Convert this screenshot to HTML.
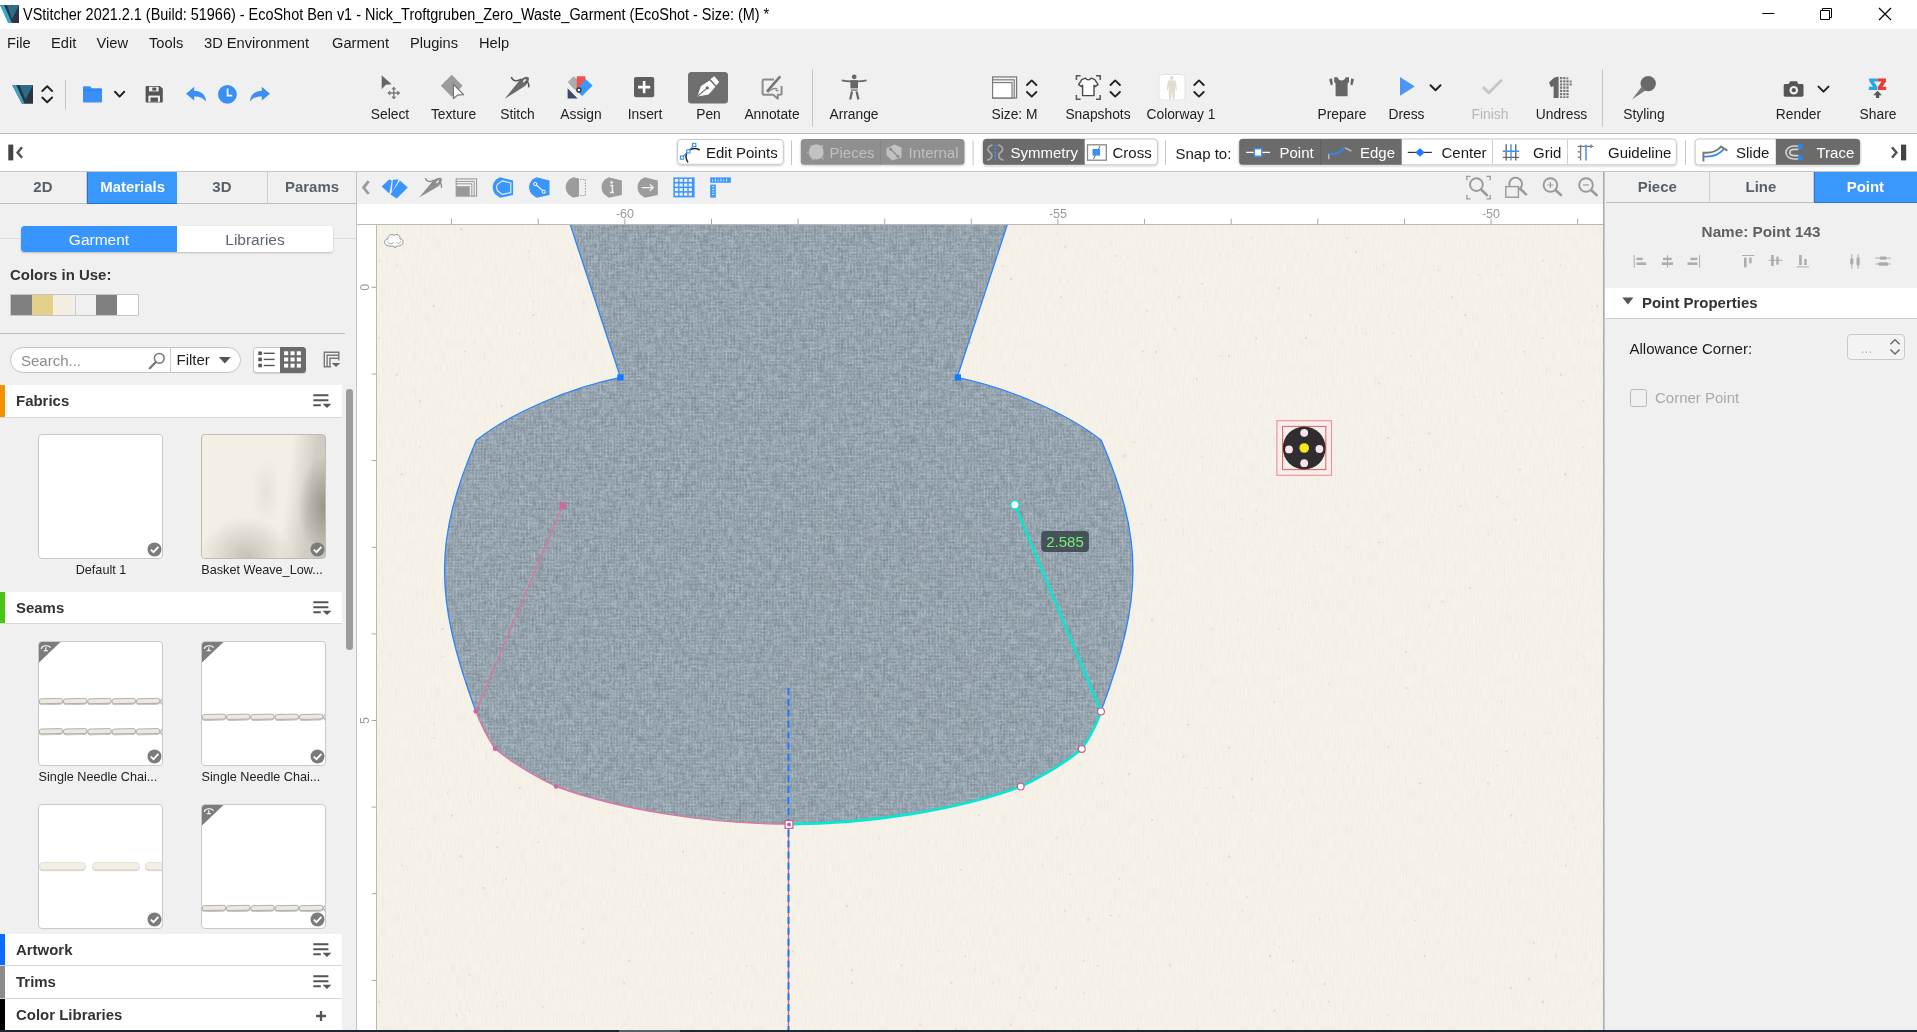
<!DOCTYPE html>
<html>
<head>
<meta charset="utf-8">
<title>VStitcher</title>
<style>
*{box-sizing:border-box;margin:0;padding:0}
html,body{width:1917px;height:1032px;overflow:hidden;background:#f0f0f0;font-family:"Liberation Sans",sans-serif;color:#222}
.a{position:absolute}
.t{position:absolute;white-space:nowrap;line-height:1}
#titlebar{left:0;top:0;width:1917px;height:29px;background:#fff}
#menubar{left:0;top:29px;width:1917px;height:28px;background:#f0f0f0}
#menubar .t{top:7px;font-size:14.67px;color:#1a1a1a}
#toolbar{left:0;top:57px;width:1917px;height:76px;background:#f0f0f0}
.tl{position:absolute;top:51px;font-size:13.800px;color:#222;white-space:nowrap;line-height:1;transform:translateX(-50%)}
#tbline{left:0;top:133px;width:1917px;height:1px;background:#bdbdbd}
#subbar{left:0;top:134px;width:1917px;height:37px;background:#fff}
#subline{left:0;top:171px;width:1917px;height:1px;background:#c6c6c6}
.btn{position:absolute;top:5.7px;height:26px;font-size:15px;line-height:26px;white-space:nowrap;color:#1a1a1a}
.vsep{position:absolute;width:1px;background:#c4c4c4}
#tabsrow{left:0;top:172px;width:1917px;height:32px;background:#f0f0f0}
.tab{position:absolute;top:0;height:32px;font-size:15.500px;font-weight:bold;color:#5a6068;text-align:center;line-height:30px;border-right:1px solid #cfcfcf;border-bottom:1px solid #b9bec6;background:#f0f0f0}
.tab span{display:inline-block;transform:scaleX(.965)}
.tab.on{background:#3a97fc;color:#fff;border-right:none;border-bottom-color:#2676cf;border-left:1px solid #2676cf}
#leftpanel{left:0;top:204px;width:356px;height:826px;background:#f0f0f0}
#canvaswrap{left:356px;top:204px;width:1249px;height:826px;background:#fff}
#rightpanel{left:1605px;top:204px;width:312px;height:826px;background:#f0f0f0}
#bottomstrip{left:0;top:1030px;width:1917px;height:2px;background:#1f2733}
.hdr{position:absolute;left:0;width:342px;height:32px;background:#fff;border-bottom:1px solid #d6d6d6}
.hdr .bar{position:absolute;left:0;top:0;width:4.500px;height:100%}
.hdr .t{left:16px;top:7.800px;font-size:15.500px;transform:scaleX(.965);transform-origin:0 0;font-weight:bold;color:#333}
.thumb{position:absolute;width:125px;height:125px;background:#fff;border:1px solid #c9c9c9;border-radius:4px;overflow:hidden}
.cap{position:absolute;font-size:13.600px;color:#222;white-space:nowrap;line-height:1;transform:translateX(-50%) scaleX(.93)}
</style>
</head>
<body>
<div id="root" style="position:absolute;left:0;top:0;width:1917px;height:1032px;will-change:transform;transform:translateZ(0)">
<div id="titlebar" class="a">
<svg class="a" style="left:0;top:5px" width="20" height="19" viewBox="0 0 20 19"><polygon points="0,0 19,0 19,18 10,18" fill="#2b3544"/><polygon points="0,0 4,0 12,18 10,18 8,18" fill="#3aa6c9"/><polygon points="7,0 19,0 12,14" fill="#2f6f86"/></svg>
<div class="t" id="ttl" style="left:23px;top:6.600px;font-size:16px;color:#000;transform:scaleX(0.9026);transform-origin:0 0">VStitcher 2021.2.1 (Build: 51966) - EcoShot Ben v1 - Nick_Troftgruben_Zero_Waste_Garment (EcoShot - Size: (M) *</div>
<svg class="a" style="left:1755px;top:0" width="150" height="29" viewBox="0 0 150 29"><g stroke="#000" stroke-width="1" fill="none"><path d="M7.300 13.500H19.300"/><path d="M65.500 10.500h9v9h-9z"/><path d="M67.500 10.500v-2h9v9h-2"/><path d="M124 8l12 12M136 8l-12 12" stroke-width="1.2"/></g></svg>
</div>
<div id="menubar" class="a">
<div class="t" style="left:7px">File</div><div class="t" style="left:51px">Edit</div><div class="t" style="left:96.5px">View</div><div class="t" style="left:149px">Tools</div><div class="t" style="left:204px">3D Environment</div><div class="t" style="left:332px">Garment</div><div class="t" style="left:410px">Plugins</div><div class="t" style="left:479px">Help</div>
</div>
<div id="toolbar" class="a">
<svg class="a" style="left:0;top:0" width="1917" height="76" viewBox="0 57 1917 76">
<!-- logo -->
<polygon points="12.2,85 33,85 33,103.8 22,103.8" fill="#2b3443"/>
<polygon points="12.2,85 16.3,85 24.6,103.8 22,103.8" fill="#36a3c8"/>
<polygon points="19.5,85 33,85 25.5,99.5" fill="#2d6c84"/>
<g fill="none" stroke="#222" stroke-width="1.9" stroke-linecap="round" stroke-linejoin="round">
<path d="M42.3 91L47.2 86.2L52.1 91M42.3 97.5L47.2 102.3L52.1 97.5"/>
<path d="M115 91.8L119.6 96.6L124.2 91.8" stroke-width="2"/>
<path d="M1027 85L1031.7 80.4L1036.4 85M1027 92L1031.7 96.6L1036.4 92"/>
<path d="M1110.5 85L1115.2 80.4L1119.9 85M1110.5 92L1115.2 96.6L1119.9 92"/>
<path d="M1194.3 85L1199 80.4L1203.7 85M1194.3 92L1199 96.6L1203.7 92"/>
<path d="M1430.5 85.2L1435.5 90.2L1440.5 85.2" stroke-width="2"/>
<path d="M1818.5 86.6L1823.5 91.6L1828.5 86.6" stroke-width="2"/>
</g>
<rect x="65" y="80" width="1" height="29.5" fill="#c6c6c6"/>
<rect x="812" y="69.5" width="1" height="57" fill="#c6c6c6"/>
<rect x="1602" y="69.5" width="1" height="57" fill="#c6c6c6"/>
<!-- folder -->
<path d="M83 87.2q0-1 1-1h6.2l1.6 2h9.2q1 0 1 1v12.3q0 1-1 1H84q-1 0-1-1z" fill="#3a8ff7"/>
<rect x="83" y="89.6" width="19" height="0.9" fill="#2f7be0"/>
<!-- save -->
<path d="M145.6 87q0-1 1-1h13.4l2.8 2.8v12.8q0 1-1 1h-15.2q-1 0-1-1z" fill="#555"/>
<rect x="149" y="86.8" width="9.6" height="4.6" fill="#f0f0f0"/><rect x="152.3" y="87.6" width="4" height="3" fill="#555"/>
<rect x="148.4" y="95.6" width="11.6" height="6.2" fill="#f0f0f0"/><rect x="150.5" y="97.5" width="7.4" height="4.3" fill="#555"/>
<!-- undo clock redo -->
<path d="M194.2 86.8L186 93.8L194.2 100.6V96.4C199.5 96.2 203.2 97.8 206.2 101.6C205.4 94.6 201.4 91 194.2 90.8Z" fill="#3a8ff7"/>
<circle cx="227.4" cy="94.4" r="9.4" fill="#3a8ff7"/><path d="M227.6 88.6V95.6H232.2" stroke="#fff" stroke-width="1.7" fill="none"/>
<path d="M261.8 86.8L270 93.8L261.8 100.6V96.4C256.5 96.2 252.8 97.8 249.8 101.6C250.6 94.6 254.6 91 261.8 90.8Z" fill="#3a8ff7"/>
<!-- select -->
<path d="M381.7 75.3L391.6 84.3L385.8 84.8L381.7 89.2Z" fill="#666"/>
<g stroke="#777" stroke-width="1.3" fill="none"><path d="M393.8 87.6V98.4M388.4 93H399.2"/><path d="M392 89.4L393.8 87.6L395.6 89.4M392 96.6L393.8 98.4L395.6 96.6M390.2 91.2L388.4 93L390.2 94.8M397.4 91.2L399.2 93L397.4 94.8"/></g>
<!-- texture -->
<polygon points="451.7,74.8 462.6,85.8 451.7,96.8 440.8,85.8" fill="#9c9c9c"/>
<path d="M453.4 84.3V98.6L457.4 95.2L463.6 94.6Z" fill="#fff" stroke="#777" stroke-width="1.3" stroke-linejoin="round"/>
<!-- stitch -->
<path d="M504.800 98.800L519.400 80.600C522 77.600 526.800 75.600 528.400 77.200C530 78.800 528 83.400 525 86Z" fill="#6a6a6a"/>
<ellipse cx="524.6" cy="80.7" rx="2.1" ry="1" transform="rotate(-45 524.6 80.7)" fill="#f0f0f0"/>
<path d="M511.3 77C512.6 81.2 517 81.8 521.4 79.2M525 82.2C527.6 80.4 529.4 83.4 528.6 87.4" stroke="#555" stroke-width="1.5" fill="none"/>
<!-- assign -->
<polygon points="567.8,82 573.6,76.3 577,79 577,91 572.8,88" fill="#adadad"/>
<polygon points="576.8,76.3 585.4,76.3 585.4,82 576.8,90.6" fill="#f0524d"/>
<polygon points="585.6,79 592.6,85.6 582.2,96 576.4,90.4" fill="#3b99fc"/>
<polygon points="567.6,88.3 567.6,98.4 577.6,98.4" fill="#3d4a63"/>
<circle cx="578.9" cy="90" r="2" fill="#fff" stroke="#2b3443" stroke-width="1.3"/>
<!-- insert -->
<rect x="634" y="77" width="20.2" height="20.2" rx="2" fill="#5f5f5f"/>
<path d="M644.1 81V93.2M638 87.1H650.2" stroke="#fff" stroke-width="2.6"/>
<!-- pen -->
<rect x="688" y="72" width="40" height="31.6" rx="3.5" fill="#6e6e6e"/>
<path d="M697.4 96.4L700.8 86.2L709.6 80.6L715.4 86.8L708.6 94.6Z" fill="#fff"/>
<polygon points="710.4,79 714.4,76.2 719.2,82 716.2,85.4" fill="#fff"/>
<path d="M697.8 96L706.4 88.6" stroke="#6e6e6e" stroke-width="1.1"/><circle cx="707.3" cy="87.9" r="1.7" fill="#6e6e6e"/>
<!-- annotate -->
<path d="M781.6 86V93.4q0 1.4-1.4 1.4h-2.4v4l-4.6-4h-9.2q-1.4 0-1.4-1.4V81q0-1.4 1.4-1.4h10" fill="none" stroke="#8c8c8c" stroke-width="2" stroke-linejoin="round"/>
<path d="M767.6 90.8L779.6 77.2" stroke="#777" stroke-width="2.6" stroke-linecap="round"/>
<path d="M768 92.4C771 89.6 774 88 776.6 88.6C775 90.6 777 91.2 778.6 90.4" stroke="#888" stroke-width="1.2" fill="none"/>
<!-- arrange -->
<circle cx="854.2" cy="76.8" r="2.4" fill="#666"/>
<path d="M841.8 80.4Q848 81.6 854.2 81.2Q860.4 81.6 866.6 80.4" stroke="#666" stroke-width="1.8" fill="none"/>
<rect x="850.4" y="80.2" width="7.6" height="8.2" fill="#666"/><rect x="850.8" y="89.4" width="6.8" height="1.4" fill="#777"/>
<path d="M852 91.6L850.2 99.6M856.6 91.6L858.4 99.6" stroke="#666" stroke-width="2.2"/>
<!-- size -->
<rect x="992.6" y="76.9" width="24" height="21" fill="#f0f0f0" stroke="#777" stroke-width="1.2"/>
<rect x="992.6" y="79.8" width="21.6" height="18.1" fill="#f0f0f0" stroke="#777" stroke-width="1.1"/>
<rect x="992.6" y="82.6" width="19.4" height="15.3" fill="#fff" stroke="#777" stroke-width="1.1"/>
<!-- snapshots -->
<path d="M1076.4 80V75.8H1080.6M1096 75.8H1100.2V80M1100.2 95V99.2H1096M1080.6 99.2H1076.4V95" fill="none" stroke="#555" stroke-width="1.5"/>
<path d="M1081.8 79.6L1085.4 78.2C1086.8 80.4 1089.8 80.4 1091.2 78.2L1094.8 79.6L1098 84.6L1095 86.6L1094 85.2V95.6H1082.6V85.2L1081.6 86.6L1078.6 84.6Z" fill="#fff" stroke="#4a4a4a" stroke-width="1.4" stroke-linejoin="round"/>
<!-- colorway -->
<rect x="1159" y="74.5" width="26" height="25.6" rx="3.5" fill="#fff" stroke="#e4e4e4" stroke-width="1"/>
<g fill="#e2ddcf"><circle cx="1171.800" cy="77.900" r="1.900"/><path d="M1168.200 80.600Q1171.800 79.800 1175.400 80.600L1176.600 85.600L1176.800 90.400L1175.700 90.500L1175.100 85.800L1174.900 91L1174.500 99.400H1172.600L1171.800 91.500L1171 99.400H1169.100L1168.700 91L1168.500 85.800L1167.900 90.500L1166.800 90.400L1167 85.600Z"/></g>
<!-- prepare -->
<path d="M1334.2 77.2H1337.6C1338.6 81.6 1344.6 81.6 1345.6 77.2H1349V82L1347.6 83.4V96.2H1335.6V83.4L1334.2 82Z" fill="#666"/>
<polygon points="1329.2,79.2 1332,78.2 1332.8,84.6 1330.8,85.6" fill="#666"/><polygon points="1354,79.2 1351.2,78.2 1350.4,84.6 1352.4,85.6" fill="#666"/>
<!-- dress -->
<polygon points="1400,77 1414.8,86.4 1400,95.8" fill="#4b96f5"/>
<!-- finish -->
<path d="M1482.8 87L1489 92.8L1501.8 79.8" stroke="#c6c6c6" stroke-width="2.8" fill="none"/>
<!-- undress -->
<path d="M1549 82.4L1554 77.8L1558.6 76.4V98H1553.6V86L1551 87.2Z" fill="#666"/>
<g fill="#777"><path d="M1560 77h2.2v2.2h-2.2zM1563.2 77h2.2v2.2h-2.2zM1566.400 77.6h2v1.600h-2z"/>
<path d="M1560 80.200h2.200v2.200h-2.200zM1563.200 80.200h2.200v2.200h-2.200zM1566.400 80.200h2.200v2.200h-2.200zM1569.600 80.600h2v1.800h-2z"/>
<path d="M1560 83.400h2.200v2.200h-2.200zM1563.200 83.400h2.200v2.200h-2.200zM1566.400 83.400h2.200v2.200h-2.200zM1569.600 83.400h2.200v2.200h-2.200z"/>
<path d="M1560 86.600h2.200v2.200h-2.200zM1563.200 86.600h2.200v2.200h-2.200zM1566.400 86.600h2.200v2.200h-2.200z"/>
<path d="M1560 89.800h2.200v2.200h-2.200zM1563.200 89.800h2.200v2.200h-2.200zM1566.400 89.800h2.200v2.200h-2.200z"/>
<path d="M1560 93h2.200v2.200h-2.200zM1563.200 93h2.200v2.200h-2.200zM1566.400 93h2.200v2.200h-2.200z"/>
<path d="M1560 96.200h2.200v1.800h-2.200zM1563.200 96.200h2.200v1.800h-2.200zM1566.400 96.200h2.200v1.800h-2.200z"/></g>
<!-- styling -->
<circle cx="1648.2" cy="83.6" r="7.7" fill="#696969"/><polygon points="1632,99.6 1641.600,86.8 1645.400,90.400" fill="#7a7a7a"/>
<!-- render -->
<path d="M1783.700 85.400q0-1.400 1.400-1.400h3.600l1.400-2.800h6.800l1.400 2.800h3.800q1.400 0 1.400 1.400v9.900q0 1.400-1.400 1.400h-17q-1.400 0-1.400-1.400z" fill="#555"/>
<circle cx="1793.800" cy="90.200" r="4.300" fill="#f0f0f0"/><circle cx="1793.800" cy="90.200" r="2.100" fill="#555"/>
<!-- share -->
<path d="M1868.800 78.400H1877.600V81.600H1873.800L1877.400 86.800V90H1868.800V86.800H1873L1869.400 81.600Z" fill="#29a9e0"/>
<path d="M1877.600 78.400H1886V81.600L1882.400 86.800H1886.200V90H1878V86.800L1881.600 81.600H1877.600Z" fill="#e83a3a"/>
<path d="M1877.600 90.800L1882 95.200H1879.200V98H1876V95.200H1873.200Z" fill="#555"/>
</svg>
<div class="tl" style="left:390px">Select</div><div class="tl" style="left:453.5px">Texture</div><div class="tl" style="left:517.5px">Stitch</div><div class="tl" style="left:581px">Assign</div><div class="tl" style="left:645px">Insert</div><div class="tl" style="left:708.5px">Pen</div><div class="tl" style="left:772px">Annotate</div><div class="tl" style="left:854px">Arrange</div>
<div class="tl" style="left:1014.5px">Size: M</div><div class="tl" style="left:1098px">Snapshots</div><div class="tl" style="left:1181px">Colorway 1</div>
<div class="tl" style="left:1342px">Prepare</div><div class="tl" style="left:1406.5px">Dress</div><div class="tl" style="left:1490px;color:#b8b8b8">Finish</div><div class="tl" style="left:1561.5px">Undress</div><div class="tl" style="left:1644px">Styling</div><div class="tl" style="left:1798.5px">Render</div><div class="tl" style="left:1878px">Share</div>
</div>
<div id="tbline" class="a"></div>
<div id="subbar" class="a">
<svg class="a" style="left:0;top:0" width="1917" height="37" viewBox="0 134 1917 37">
<defs><filter id="sh" x="-5%" y="-20%" width="110%" height="150%"><feDropShadow dx="0" dy="1" stdDeviation="0.8" flood-color="#000" flood-opacity="0.22"/></filter></defs>
<!-- collapse icons -->
<rect x="8.300" y="144.600" width="5" height="15.800" fill="#444"/><path d="M22 147.200L17.600 152.500L22 157.800" stroke="#555" stroke-width="2.500" fill="none"/>
<rect x="1901" y="144.600" width="5.200" height="15.800" fill="#444"/><path d="M1892 147.200L1896.400 152.500L1892 157.800" stroke="#555" stroke-width="2.500" fill="none"/>
<!-- separators -->
<g fill="#c4c4c4"><rect x="791" y="140.500" width="1" height="24.500"/><rect x="972.600" y="140.500" width="1" height="24.500"/><rect x="1165" y="140.500" width="1" height="24.500"/><rect x="1685" y="140.500" width="1" height="24.500"/></g>
<!-- Edit points -->
<rect x="677.500" y="139.500" width="105.800" height="24.800" rx="3.500" fill="#fff" stroke="#c9c9c9" filter="url(#sh)"/>
<path d="M688 162.400C683.500 155 687 149.500 693 148.700C695.500 148.400 697.500 148.800 699.700 150" stroke="#222" stroke-width="1.500" fill="none"/>
<path d="M681.800 157.600L688.400 151.400L694.200 144.600" stroke="#3a8ff7" stroke-width="1.300" fill="none"/>
<g fill="#fff" stroke="#3a8ff7" stroke-width="1.100"><rect x="680.400" y="156" width="3.200" height="3.200"/><rect x="686.800" y="149.800" width="3.200" height="3.200"/><rect x="692.600" y="143.400" width="3.200" height="3.200"/></g>
<!-- Pieces / Internal -->
<rect x="800.800" y="139" width="163.700" height="25.800" rx="3.500" fill="#8f8f8f" filter="url(#sh)"/>
<rect x="880" y="139" width="1" height="25.800" fill="#868686"/>
<path d="M809 152.500C809 147 812 144.500 816.500 144.500C821 144.500 823.500 147 823.500 152.500C823.500 157 821 159 816.500 159.500C812 159 809 157.500 809 152.500Z" fill="#c2c2c2"/>
<g fill="#b4b4b4"><circle cx="811.200" cy="146" r="1"/><circle cx="822.400" cy="146" r="1"/><circle cx="807.800" cy="152.600" r="1"/><circle cx="812.600" cy="159.400" r="1"/><circle cx="822.800" cy="158.600" r="1"/></g>
<path d="M886.500 148.500L894.500 144.500L901.500 147.500L901.500 157.500L892 160.500L886.500 155Z" fill="#c2c2c2"/>
<path d="M891 149.500L897.500 156" stroke="#8f8f8f" stroke-width="1.400"/><circle cx="890.600" cy="149.200" r="1.600" fill="#8f8f8f"/><circle cx="898" cy="156.400" r="1.600" fill="#8f8f8f"/>
<!-- Symmetry / Cross -->
<rect x="983" y="139" width="174.500" height="25.800" rx="3.500" fill="#fff" stroke="#c9c9c9" filter="url(#sh)"/>
<path d="M986.500 139H1084.700V164.800H986.500q-3.500 0-3.500-3.500V142.500q0-3.500 3.500-3.500z" fill="#6b6b6b"/>
<path d="M992.600 145C987 146 987 150.500 990 152.500C993 154.500 992.500 159.500 987 160M998 145C1003.600 146 1003.600 150.500 1000.600 152.500C997.600 154.500 998.100 159.500 1003.600 160" stroke="#a8a8a8" stroke-width="1.600" fill="none"/>
<path d="M995.300 144.500V161.500" stroke="#3a8ff7" stroke-width="1.400" stroke-dasharray="2.200 1.300"/>
<rect x="1087.500" y="144.800" width="18.800" height="15.400" fill="#fff" stroke="#888" stroke-width="1.300"/>
<path d="M1100 146L1093.500 159" stroke="#666" stroke-width="1"/><rect x="1092.500" y="149" width="7.600" height="6.600" fill="#3a8ff7"/>
<!-- Snap group -->
<rect x="1239.200" y="139" width="437.200" height="25.800" rx="3.500" fill="#fff" stroke="#c9c9c9" filter="url(#sh)"/>
<path d="M1242.700 139H1401.700V164.800H1242.700q-3.500 0-3.500-3.500V142.500q0-3.500 3.500-3.500z" fill="#6b6b6b"/>
<rect x="1320.200" y="139" width="1" height="25.800" fill="#5e5e5e"/>
<rect x="1492" y="139.500" width="1" height="24.800" fill="#d0d0d0"/><rect x="1567" y="139.500" width="1" height="24.800" fill="#d0d0d0"/>
<path d="M1246.200 152.400H1270" stroke="#fff" stroke-width="1.300"/><rect x="1254.400" y="148.800" width="7.400" height="7.400" fill="#fff" stroke="#3a8ff7" stroke-width="1.400"/>
<path d="M1328.800 153.500V159.200" stroke="#bbb" stroke-width="1.500"/><path d="M1344.600 147.600L1351.400 151" stroke="#bbb" stroke-width="1.500"/>
<path d="M1328.600 153.800C1336 154.500 1340 152.500 1344.800 147.600" stroke="#2f86f6" stroke-width="1.800" fill="none"/>
<path d="M1407.800 152.400H1431.800" stroke="#333" stroke-width="1.200"/><polygon points="1420,148 1424.600,152.400 1420,156.800 1415.400,152.400" fill="#1f7bff"/>
<g stroke="#666" stroke-width="1.400"><path d="M1506.200 144.300V160.400M1515.800 144.300V160.400M1502.800 157.400H1519.200"/></g><path d="M1511 144.300V160.400M1502.800 151.200H1519.200" stroke="#3a8ff7" stroke-width="1.400"/>
<g stroke="#777" stroke-width="1.300"><path d="M1580.600 144.800V160.400M1577.600 146.400H1593.400M1591 144.600V148M1577.600 151.800H1580.600M1577.600 157.200H1580.600"/></g><path d="M1586 144.800V160.400" stroke="#3a8ff7" stroke-width="1.500"/>
<!-- Slide / Trace -->
<rect x="1695.200" y="139" width="164.800" height="25.800" rx="3.500" fill="#fff" stroke="#c9c9c9" filter="url(#sh)"/>
<path d="M1775.800 139H1856.500q3.500 0 3.500 3.500V161.300q0 3.500-3.500 3.500H1775.800z" fill="#6b6b6b"/>
<path d="M1703.400 161.400V152.600C1711 153.400 1716.500 151.600 1721 146.600L1727.400 150.600" stroke="#777" stroke-width="1.900" fill="none"/>
<path d="M1704 156.600C1712.500 157.200 1718.500 155 1723.600 149.400" stroke="#2f86f6" stroke-width="1.700" fill="none"/>
<path d="M1798.500 146H1794C1789.500 146 1786 148.800 1786 152.500C1786 156.200 1789.500 159 1794 159H1798.500M1798.500 149.400H1794.400C1791.600 149.400 1789.800 150.700 1789.800 152.500C1789.800 154.300 1791.600 155.600 1794.400 155.600H1798.500" stroke="#d2d2d2" stroke-width="1.700" fill="none"/>
<rect x="1798.300" y="144.400" width="4" height="4.900" fill="#1e8bff"/><rect x="1798.300" y="155.400" width="4" height="4.900" fill="#1e8bff"/>
</svg>
<div class="btn" style="left:706px">Edit Points</div>
<div class="btn" style="left:829.500px;color:#c0c0c0">Pieces</div><div class="btn" style="left:908.500px;color:#c0c0c0">Internal</div>
<div class="btn" style="left:1010.500px;color:#fff">Symmetry</div><div class="btn" style="left:1112.500px">Cross</div>
<div class="btn" style="left:1175.500px;top:6.7px">Snap to:</div>
<div class="btn" style="left:1279.500px;color:#fff">Point</div><div class="btn" style="left:1360px;color:#fff">Edge</div><div class="btn" style="left:1441.500px">Center</div><div class="btn" style="left:1533px">Grid</div><div class="btn" style="left:1608px">Guideline</div>
<div class="btn" style="left:1736px">Slide</div><div class="btn" style="left:1816.500px;color:#fff">Trace</div>
</div>
<div id="subline" class="a"></div>
<div id="tabsrow" class="a">
<div class="tab" style="left:0;width:87px"><span>2D</span></div><div class="tab on" style="left:87px;width:90px"><span>Materials</span></div><div class="tab" style="left:177px;width:91px"><span>3D</span></div><div class="tab" style="left:268px;width:88px;border-right:none"><span>Params</span></div>
<div class="a" style="left:356px;top:0;width:1px;height:32px;background:#c4c4c4"></div>
<div class="a" style="left:1603px;top:0;width:1px;height:32px;background:#ababab"></div><div class="a" style="left:1604px;top:0;width:1px;height:32px;background:#c9c9c9"></div>
<div class="tab" style="left:1605.500px;width:104px;height:31px"><span>Piece</span></div><div class="tab" style="left:1709.500px;width:104px;height:31px"><span>Line</span></div><div class="tab on" style="left:1813.500px;width:103.500px;height:31px"><span>Point</span></div>
<svg class="a" style="left:356px;top:0" width="1250" height="32" viewBox="356 172 1250 32">
<path d="M368.600 181.200L363.600 187.600L368.600 194" stroke="#9a9a9a" stroke-width="2.800" fill="none"/>
<!-- swatches icon -->
<g fill="#3a96fd"><polygon points="381.600,186.600 389,179.600 391.800,180.400 389.400,193.600"/><polygon points="392.800,179.800 398.800,179.400 391.600,193"/><polygon points="400,180.400 407.800,187.400 396.800,198.400 390.400,194.600"/></g>
<!-- needle -->
<path d="M419.200 197.400L433 180.800C435.400 178.200 440 176.800 441.400 178.200C442.800 179.600 441 184 438 186.400Z" fill="#8e8e8e"/>
<ellipse cx="437.600" cy="181.800" rx="1.900" ry="0.900" transform="rotate(-45 437.600 181.800)" fill="#f0f0f0"/>
<path d="M425.400 178C426.400 181.800 430.200 182.400 434 180.200M437.800 183.200C440.400 181.600 442 184 441.400 187.800" stroke="#8a8a8a" stroke-width="1.400" fill="none"/>
<!-- stack -->
<rect x="456.200" y="178.900" width="20.400" height="17.200" fill="#f0f0f0" stroke="#999" stroke-width="1.100"/><path d="M456.200 181.400H474.200V196M456.200 183.800H471.800V196" stroke="#999" stroke-width="1" fill="none"/><rect x="456.200" y="186.200" width="13.600" height="9.900" fill="#999"/>
<!-- blue piece w/ outline -->
<path d="M500.0 177.2L513.1 180.4L513.1 195L500.0 197.8L495.0 194C492.5 190.5 492.0 186.5 493.5 183L496.0 179.5Z" fill="#3a96fd"/>
<path d="M502.300 180.900L510.800 183V192.600L502.200 194.400L497.600 190.800C496.400 188.600 496.400 186.400 497.400 184.400Z" fill="none" stroke="#e8f2ff" stroke-width="1.100"/>
<path d="M536.4 177.2L549.5 180.4L549.5 195L536.4 197.8L531.4 194C528.9 190.5 528.4 186.5 529.9 183L532.4 179.5Z" fill="#3a96fd"/>
<path d="M535.600 184.400L543.400 191.400" stroke="#fff" stroke-width="1.200"/><circle cx="535.200" cy="184" r="1.600" fill="#3a96fd" stroke="#fff" stroke-width="1"/><circle cx="543.800" cy="191.800" r="1.600" fill="#3a96fd" stroke="#fff" stroke-width="1"/>
<!-- gray pieces -->
<path d="M573 177.2L579 178.600V196.500L573 197.800L568 194C565.5 190.500 565 186.500 566.5 183L569 179.500Z" fill="#9c9c9c"/><path d="M580 179.400H585.400V195.600H580" stroke="#9c9c9c" stroke-width="1" stroke-dasharray="1.600 1.200" fill="none"/>
<path d="M608.8 177.2L621.9 180.4L621.9 195L608.8 197.8L603.8 194C601.3 190.5 600.8 186.5 602.3 183L604.8 179.5Z" fill="#9c9c9c"/>
<circle cx="611.600" cy="182.400" r="1.300" fill="#f0f0f0"/><path d="M610.200 185.400H612.400V192.400M609.800 192.600H614" stroke="#f0f0f0" stroke-width="1.500" fill="none"/>
<path d="M644.8 177.2L657.9 180.4L657.9 195L644.8 197.8L639.8 194C637.3 190.5 636.8 186.5 638.3 183L640.8 179.5Z" fill="#9c9c9c"/>
<path d="M641.600 187.600H653M649.800 184.400L653.200 187.600L649.800 190.800" stroke="#f0f0f0" stroke-width="1.400" fill="none"/>
<!-- grid -->
<rect x="673.400" y="177.400" width="21.200" height="20" fill="#3a96fd"/>
<g fill="#f0f0f0"><rect x="674.900" y="178.900" width="3.200" height="3"/><rect x="679.500" y="178.900" width="3.200" height="3"/><rect x="684.100" y="178.900" width="3.200" height="3"/><rect x="688.700" y="178.900" width="3.200" height="3"/><rect x="674.900" y="183.500" width="3.200" height="3"/><rect x="679.500" y="183.500" width="3.200" height="3"/><rect x="684.100" y="183.500" width="3.200" height="3"/><rect x="688.700" y="183.500" width="3.200" height="3"/><rect x="674.900" y="188.100" width="3.200" height="3"/><rect x="679.500" y="188.100" width="3.200" height="3"/><rect x="684.100" y="188.100" width="3.200" height="3"/><rect x="688.700" y="188.100" width="3.200" height="3"/><rect x="674.900" y="192.700" width="3.200" height="3"/><rect x="679.500" y="192.700" width="3.200" height="3"/><rect x="684.100" y="192.700" width="3.200" height="3"/><rect x="688.700" y="192.700" width="3.200" height="3"/></g>
<!-- ruler icon -->
<rect x="710.200" y="177.400" width="20.600" height="5.400" fill="#3a96fd"/><rect x="710.200" y="184.600" width="5.600" height="13" fill="#3a96fd"/>
<path d="M712.600 179.600V181.600M715.400 178.600V181.600M718.200 179.600V181.600M721 178.600V181.600M723.800 179.600V181.600M726.600 178.600V181.600M712 186.800H714.400M712 189.400H714.400M712 192H714.400M712 194.600H714.400" stroke="#f0f0f0" stroke-width="0.900"/>
<!-- zoom icons -->
<g stroke="#9a9a9a" fill="none" stroke-width="1.900">
<path d="M1466.800 180.200V176.400H1470.600M1486.400 176.400H1490.200V180.200M1490.200 195V198.800H1486.400M1470.600 198.800H1466.800V195" stroke-width="1.300"/>
<circle cx="1476.400" cy="184.600" r="6.400"/><path d="M1481 189.400L1487 195.200" stroke-width="2.600" stroke-linecap="round"/>
<circle cx="1515.600" cy="184" r="6.400"/><path d="M1520.200 188.800L1526 194.400" stroke-width="2.600" stroke-linecap="round"/>
<rect x="1505.800" y="186.600" width="12.600" height="10.600" fill="#f0f0f0" stroke-width="1.400"/>
<circle cx="1550.400" cy="185" r="6.800"/><path d="M1555.400 190L1561 195" stroke-width="2.600" stroke-linecap="round"/><path d="M1547.400 185H1553.400M1550.400 182V188" stroke-width="1.200"/>
<circle cx="1586" cy="185" r="6.800"/><path d="M1591 190L1596.600 195" stroke-width="2.600" stroke-linecap="round"/><path d="M1583 185H1589" stroke-width="1.200"/>
</g>
</svg>
</div>
<div id="leftpanel" class="a">
<svg width="0" height="0" style="position:absolute"><defs><filter id="st" x="-5%" y="-50%" width="110%" height="250%"><feDropShadow dx="0" dy="0.9" stdDeviation="0.7" flood-color="#000" flood-opacity="0.3"/></filter></defs></svg>
<div class="a" style="left:0;top:34px;width:356px;height:1px;background:#dcdcdc"></div>
<div class="a" style="left:21px;top:22px;width:312px;height:26px;background:#fff;border-radius:3.500px;box-shadow:0 1px 2px rgba(0,0,0,.22)"></div>
<div class="a" style="left:21px;top:22px;width:156px;height:26px;background:#3895fd;border-radius:3.500px 0 0 3.500px"></div>
<div class="t" style="left:99px;top:27.800px;font-size:15.500px;color:#fff;transform:translateX(-50%)">Garment</div>
<div class="t" style="left:255px;top:27.800px;font-size:15.500px;color:#5f6673;transform:translateX(-50%)">Libraries</div>
<div class="t" style="left:9.500px;top:62.600px;font-size:15.500px;font-weight:bold;color:#333;transform:scaleX(.965);transform-origin:0 0">Colors in Use:</div>
<div class="a" style="left:10px;top:90px;width:128.500px;height:22px;border:1px solid #c6c6c6;background:linear-gradient(to right,#808080 0,#808080 21px,#e3d088 21px,#e3d088 42.300px,#f3eee1 42.300px,#f3eee1 63.600px,#cfcfcf 63.600px,#cfcfcf 64.600px,#f0f0f0 64.600px,#f0f0f0 85px,#808080 85px,#808080 106px,#fff 106px)"></div>
<div class="a" style="left:0;top:129px;width:345px;height:1px;background:#bdbdbd"></div>
<div class="a" style="left:10px;top:143px;width:230.500px;height:26px;border:1px solid #c2c2c2;border-radius:13px;background:#fff"></div>
<div class="a" style="left:170px;top:144px;width:1px;height:24px;background:#cfcfcf"></div>
<div class="t" style="left:21px;top:148.800px;font-size:15px;color:#8c8c8c">Search...</div>
<div class="t" style="left:176.500px;top:147.500px;font-size:15px;color:#222">Filter</div>
<svg class="a" style="left:145px;top:145px" width="100" height="24" viewBox="145 349 100 24"><circle cx="159.300" cy="358.300" r="4.900" fill="#fff" stroke="#777" stroke-width="1.500"/><path d="M155.600 362.200L149.800 368.200" stroke="#777" stroke-width="2.300" stroke-linecap="round"/><polygon points="218.800,357 230.800,357 224.800,363.400" fill="#555"/></svg>
<div class="a" style="left:253px;top:143px;width:53px;height:26px;border:1px solid #c6c6c6;border-radius:3.500px;background:#fff;box-shadow:0 1px 1px rgba(0,0,0,.12)"></div>
<div class="a" style="left:280px;top:143px;width:26px;height:26px;border-radius:0 3.500px 3.500px 0;background:#6b6b6b"></div>
<svg class="a" style="left:253px;top:143px" width="92" height="26" viewBox="253 347 92 26">
<g fill="#555"><rect x="258.300" y="351.500" width="3.600" height="3.600"/><rect x="258.300" y="357.600" width="3.600" height="3.600"/><rect x="258.300" y="363.700" width="3.600" height="3.600"/><rect x="263.700" y="352.600" width="10.900" height="1.400"/><rect x="263.700" y="358.700" width="10.900" height="1.400"/><rect x="263.700" y="364.800" width="10.900" height="1.400"/></g>
<g fill="#fff"><rect x="284.100" y="351.300" width="4.100" height="3.900"/><rect x="290.500" y="351.300" width="4.100" height="3.900"/><rect x="296.800" y="351.300" width="4.100" height="3.900"/><rect x="284.100" y="357.500" width="4.100" height="3.900"/><rect x="290.500" y="357.500" width="4.100" height="3.900"/><rect x="296.800" y="357.500" width="4.100" height="3.900"/><rect x="284.100" y="363.700" width="4.100" height="3.900"/><rect x="290.500" y="363.700" width="4.100" height="3.900"/><rect x="296.800" y="363.700" width="4.100" height="3.900"/></g>
<path d="M324.300 367.400V352.200H338.800V360.600M327.100 367.400V355.200H338.800M329.900 367.400V358.200H338.800M323.600 366.800H331" stroke="#787878" stroke-width="1.400" fill="none"/><polygon points="331.700,363 340.200,363 336,367" fill="#666"/>
</svg>
<div class="hdr" style="top:181px;height:33px"><div class="bar" style="background:#f39200"></div><div class="t">Fabrics</div><svg width="20" height="16" viewBox="0 0 20 16" style="position:absolute;left:312px;top:8px"><path d="M1.300 2.300H16.400M1.300 7.300H16.400M1.300 12.300H8.800" stroke="#555" stroke-width="2.100"/><polygon points="10.600,10.800 19.400,10.800 15,15" fill="#555"/></svg></div>
<div class="a" style="left:346.300px;top:185px;width:6.600px;height:261px;background:#9c9c9c;border-radius:3.300px"></div>
<div class="thumb" style="left:38px;top:230px"><svg width="15" height="15" viewBox="0 0 15 15" style="position:absolute;left:107.500px;top:107px"><circle cx="7.500" cy="7.500" r="7" fill="#7b7b7b"/><path d="M3.800 7.600L6.500 10.200L11.400 4.900" stroke="#fff" stroke-width="1.800" fill="none"/></svg></div>
<div class="thumb" style="left:201px;top:230px;border-color:#bdbbb4;background:radial-gradient(ellipse 22% 40% at 100% 58%,rgba(120,117,108,.62),rgba(120,117,108,0) 100%),linear-gradient(97deg,rgba(150,147,137,0) 66%,rgba(150,147,137,.36) 84%,rgba(140,137,128,.42) 100%),radial-gradient(ellipse 38% 34% at 36% 100%,rgba(150,147,137,.5),rgba(150,147,137,0) 100%),radial-gradient(ellipse 12% 28% at 52% 46%,rgba(180,177,165,.2),rgba(180,177,165,0) 100%),#f3efe4"><svg width="15" height="15" viewBox="0 0 15 15" style="position:absolute;left:107.500px;top:107px"><circle cx="7.500" cy="7.500" r="7" fill="#7b7b7b"/><path d="M3.800 7.600L6.500 10.200L11.400 4.900" stroke="#fff" stroke-width="1.800" fill="none"/></svg></div>
<div class="cap" style="left:100.800px;top:359.300px">Default 1</div><div class="cap" style="left:262px;top:359.300px">Basket Weave_Low...</div>
<div class="hdr" style="top:388px"><div class="bar" style="background:#4cc417"></div><div class="t">Seams</div><svg width="20" height="16" viewBox="0 0 20 16" style="position:absolute;left:312px;top:8px"><path d="M1.300 2.300H16.400M1.300 7.300H16.400M1.300 12.300H8.800" stroke="#555" stroke-width="2.100"/><polygon points="10.600,10.800 19.400,10.800 15,15" fill="#555"/></svg></div>
<div class="thumb" style="left:38px;top:437px"><svg width="123" height="123" viewBox="0 0 123 123" style="position:absolute;left:0;top:0"><g fill="#ebe8df" stroke="#a5a29a" stroke-width="0.8" filter="url(#st)"><rect x="0.1" y="56.6" width="23.6" height="4.9" rx="2.4" transform="rotate(-1.3 12.0 59.1)"/><rect x="24.4" y="56.6" width="23.6" height="4.9" rx="2.4" transform="rotate(-1.3 36.2 59.1)"/><rect x="48.7" y="56.6" width="23.6" height="4.9" rx="2.4" transform="rotate(-1.3 60.5 59.1)"/><rect x="73.0" y="56.6" width="23.6" height="4.9" rx="2.4" transform="rotate(-1.3 84.9 59.1)"/><rect x="97.3" y="56.6" width="23.6" height="4.9" rx="2.4" transform="rotate(-1.3 109.2 59.1)"/><rect x="121.6" y="56.6" width="23.6" height="4.9" rx="2.4" transform="rotate(-1.3 133.4 59.1)"/></g><g fill="#ebe8df" stroke="#a5a29a" stroke-width="0.8" filter="url(#st)"><rect x="0.1" y="86.8" width="23.6" height="4.9" rx="2.4" transform="rotate(-1.3 12.0 89.3)"/><rect x="24.4" y="86.8" width="23.6" height="4.9" rx="2.4" transform="rotate(-1.3 36.2 89.3)"/><rect x="48.7" y="86.8" width="23.6" height="4.9" rx="2.4" transform="rotate(-1.3 60.5 89.3)"/><rect x="73.0" y="86.8" width="23.6" height="4.9" rx="2.4" transform="rotate(-1.3 84.9 89.3)"/><rect x="97.3" y="86.8" width="23.6" height="4.9" rx="2.4" transform="rotate(-1.3 109.2 89.3)"/><rect x="121.6" y="86.8" width="23.6" height="4.9" rx="2.4" transform="rotate(-1.3 133.4 89.3)"/></g><polygon points="0,0 21.500,0 0,20.500" fill="#7c7c7c"/><path d="M2.200 6.800C3 3.400 9.500 2.600 11.600 5.600M6.800 5.200V8.600M4.600 8.800H9" stroke="#fff" stroke-width="1.100" fill="none"/></svg><svg width="15" height="15" viewBox="0 0 15 15" style="position:absolute;left:107.500px;top:107px"><circle cx="7.500" cy="7.500" r="7" fill="#7b7b7b"/><path d="M3.800 7.600L6.500 10.200L11.400 4.900" stroke="#fff" stroke-width="1.800" fill="none"/></svg></div>
<div class="thumb" style="left:201px;top:437px"><svg width="123" height="123" viewBox="0 0 123 123" style="position:absolute;left:0;top:0"><g fill="#ebe8df" stroke="#a5a29a" stroke-width="0.8" filter="url(#st)"><rect x="0.1" y="72.3" width="23.6" height="4.9" rx="2.4" transform="rotate(-1.3 12.0 74.8)"/><rect x="24.4" y="72.3" width="23.6" height="4.9" rx="2.4" transform="rotate(-1.3 36.2 74.8)"/><rect x="48.7" y="72.3" width="23.6" height="4.9" rx="2.4" transform="rotate(-1.3 60.5 74.8)"/><rect x="73.0" y="72.3" width="23.6" height="4.9" rx="2.4" transform="rotate(-1.3 84.9 74.8)"/><rect x="97.3" y="72.3" width="23.6" height="4.9" rx="2.4" transform="rotate(-1.3 109.2 74.8)"/><rect x="121.6" y="72.3" width="23.6" height="4.9" rx="2.4" transform="rotate(-1.3 133.4 74.8)"/></g><polygon points="0,0 21.500,0 0,20.500" fill="#7c7c7c"/><path d="M2.200 6.800C3 3.400 9.500 2.600 11.600 5.600M6.800 5.200V8.600M4.600 8.800H9" stroke="#fff" stroke-width="1.100" fill="none"/></svg><svg width="15" height="15" viewBox="0 0 15 15" style="position:absolute;left:107.500px;top:107px"><circle cx="7.500" cy="7.500" r="7" fill="#7b7b7b"/><path d="M3.800 7.600L6.500 10.200L11.400 4.900" stroke="#fff" stroke-width="1.800" fill="none"/></svg></div>
<div class="cap" style="left:98px;top:566.300px">Single Needle Chai...</div><div class="cap" style="left:260.500px;top:566.300px">Single Needle Chai...</div>
<div class="thumb" style="left:38px;top:600px"><svg width="123" height="123" viewBox="0 0 123 123" style="position:absolute;left:0;top:0"><g fill="#f3efe4" stroke="#e0dbce" stroke-width="0.700" filter="url(#st)"><rect x="0.500" y="57.400" width="46" height="7.200" rx="3.600"/><rect x="53.500" y="57.400" width="47" height="7.200" rx="3.600"/><rect x="106.500" y="57.400" width="30" height="7.200" rx="3.600"/></g></svg><svg width="15" height="15" viewBox="0 0 15 15" style="position:absolute;left:107.500px;top:107px"><circle cx="7.500" cy="7.500" r="7" fill="#7b7b7b"/><path d="M3.800 7.600L6.500 10.200L11.400 4.900" stroke="#fff" stroke-width="1.800" fill="none"/></svg></div>
<div class="thumb" style="left:201px;top:600px"><svg width="123" height="123" viewBox="0 0 123 123" style="position:absolute;left:0;top:0"><g fill="#ebe8df" stroke="#a5a29a" stroke-width="0.8" filter="url(#st)"><rect x="0.1" y="100.5" width="23.6" height="4.9" rx="2.4" transform="rotate(-1.3 12.0 103)"/><rect x="24.4" y="100.5" width="23.6" height="4.9" rx="2.4" transform="rotate(-1.3 36.2 103)"/><rect x="48.7" y="100.5" width="23.6" height="4.9" rx="2.4" transform="rotate(-1.3 60.5 103)"/><rect x="73.0" y="100.5" width="23.6" height="4.9" rx="2.4" transform="rotate(-1.3 84.9 103)"/><rect x="97.3" y="100.5" width="23.6" height="4.9" rx="2.4" transform="rotate(-1.3 109.2 103)"/><rect x="121.6" y="100.5" width="23.6" height="4.9" rx="2.4" transform="rotate(-1.3 133.4 103)"/></g><polygon points="0,0 21.500,0 0,20.500" fill="#7c7c7c"/><path d="M2.200 6.800C3 3.400 9.500 2.600 11.600 5.600M6.800 5.200V8.600M4.600 8.800H9" stroke="#fff" stroke-width="1.100" fill="none"/></svg><svg width="15" height="15" viewBox="0 0 15 15" style="position:absolute;left:107.500px;top:107px"><circle cx="7.500" cy="7.500" r="7" fill="#7b7b7b"/><path d="M3.800 7.600L6.500 10.200L11.400 4.900" stroke="#fff" stroke-width="1.800" fill="none"/></svg></div>
<div class="hdr" style="top:730px"><div class="bar" style="background:#0a6cff"></div><div class="t">Artwork</div><svg width="20" height="16" viewBox="0 0 20 16" style="position:absolute;left:312px;top:8px"><path d="M1.300 2.300H16.400M1.300 7.300H16.400M1.300 12.300H8.800" stroke="#555" stroke-width="2.100"/><polygon points="10.600,10.800 19.400,10.800 15,15" fill="#555"/></svg></div>
<div class="hdr" style="top:762px;height:33px"><div class="bar" style="background:#8c8c8c"></div><div class="t">Trims</div><svg width="20" height="16" viewBox="0 0 20 16" style="position:absolute;left:312px;top:8px"><path d="M1.300 2.300H16.400M1.300 7.300H16.400M1.300 12.300H8.800" stroke="#555" stroke-width="2.100"/><polygon points="10.600,10.800 19.400,10.800 15,15" fill="#555"/></svg></div>
<div class="hdr" style="top:795px"><div class="bar" style="background:#000"></div><div class="t" style="top:8.300px">Color Libraries</div><svg width="12" height="12" viewBox="0 0 12 12" style="position:absolute;left:314.500px;top:10.500px"><path d="M6 1V11M1 6H11" stroke="#555" stroke-width="2.300"/></svg></div>
<div class="a" style="left:356px;top:0;width:1px;height:826px;background:#c4c4c4"></div>
</div>
<div id="canvaswrap" class="a">
<svg class="a" style="left:0;top:0" width="1249" height="826" viewBox="356 204 1249 826">
<defs>
<filter id="gn" x="0" y="0" width="100%" height="100%" color-interpolation-filters="sRGB"><feTurbulence type="fractalNoise" baseFrequency="0.36 0.11" numOctaves="1" seed="7" result="v"/><feTurbulence type="fractalNoise" baseFrequency="0.11 0.36" numOctaves="1" seed="11" result="h"/><feTurbulence type="fractalNoise" baseFrequency="0.5" numOctaves="1" seed="3" result="f"/><feTurbulence type="fractalNoise" baseFrequency="0.06" numOctaves="2" seed="5" result="b"/><feComposite in="v" in2="h" operator="arithmetic" k1="0" k2="0.5" k3="0.5" k4="0" result="vh"/><feComposite in="vh" in2="f" operator="arithmetic" k1="0" k2="0.6" k3="0.4" k4="0" result="vhf"/><feComposite in="vhf" in2="b" operator="arithmetic" k1="0" k2="0.95" k3="0.05" k4="0"/><feColorMatrix type="matrix" values="3.4 0 0 0 -1.2  3.4 0 0 0 -1.2  3.4 0 0 0 -1.2  0 0 0 0 1"/></filter>
<filter id="cn" x="0" y="0" width="100%" height="100%"><feTurbulence type="fractalNoise" baseFrequency="0.9 0.08" numOctaves="1" seed="2"/><feColorMatrix type="matrix" values="1.5 0 0 0 -0.25  1.5 0 0 0 -0.25  1.5 0 0 0 -0.25  0 0 0 0 1"/></filter>
<filter id="sp" x="0" y="0" width="100%" height="100%" color-interpolation-filters="sRGB"><feTurbulence type="fractalNoise" baseFrequency="0.22" numOctaves="1" seed="21"/><feColorMatrix type="matrix" values="0 0 0 0 0.9  0 0 0 0 0.76  0 0 0 0 0.56  14 0 0 0 -10.4"/></filter>
<pattern id="weave" width="3" height="3" patternUnits="userSpaceOnUse"><rect x="0" y="0" width="1" height="3" fill="#fff" opacity="0.07"/><rect x="0" y="0" width="3" height="1" fill="#fff" opacity="0.045"/><rect x="1.500" y="1.500" width="1.500" height="1.500" fill="#000" opacity="0.03"/></pattern>
<clipPath id="gclip"><path d="M570.4 225.0L620.4 377.4C570.0 388.0 512.0 412.0 476.3 440.2C435.3 536.8 432.8 594.9 475.8 711.2Q483.5 731.5 495.0 748.8Q521.0 769.6 556.2 786.5C620.0 810.0 710.0 824.1 788.8 824.1C867.6 824.1 957.6 810.0 1020.7 786.6Q1056.6 769.6 1081.8 749.0Q1094.1 731.5 1101.0 711.4C1144.8 594.9 1142.3 536.8 1101.3 440.2C1065.6 412.0 1007.6 388.0 957.2 377.4L1007.2 225.0Z"/></clipPath>
</defs>
<rect x="356" y="204" width="1249" height="826" fill="#fff"/>
<rect x="377" y="225" width="1226.500" height="805" fill="#f8f4ea"/>
<rect x="377" y="225" width="1226.500" height="805" filter="url(#cn)" opacity="0.045"/>
<rect x="377" y="225" width="1226.500" height="805" filter="url(#sp)" opacity="0.55"/>
<path d="M570.4 225.0L620.4 377.4C570.0 388.0 512.0 412.0 476.3 440.2C435.3 536.8 432.8 594.9 475.8 711.2Q483.5 731.5 495.0 748.8Q521.0 769.6 556.2 786.5C620.0 810.0 710.0 824.1 788.8 824.1C867.6 824.1 957.6 810.0 1020.7 786.6Q1056.6 769.6 1081.8 749.0Q1094.1 731.5 1101.0 711.4C1144.8 594.9 1142.3 536.8 1101.3 440.2C1065.6 412.0 1007.6 388.0 957.2 377.4L1007.2 225.0Z" fill="#96a7b4"/>
<rect x="440" y="225" width="700" height="602" filter="url(#gn)" clip-path="url(#gclip)" opacity="0.15"/>
<rect x="440" y="225" width="700" height="602" fill="url(#weave)" clip-path="url(#gclip)"/>
<path d="M570.4 225.0L620.4 377.4C570.0 388.0 512.0 412.0 476.3 440.2C435.3 536.8 432.8 594.9 475.8 711.2" fill="none" stroke="#2a82ff" stroke-width="1.250"/>
<path d="M1007.2 225.0L957.2 377.4C1007.6 388.0 1065.6 412.0 1101.3 440.2C1142.3 536.8 1144.8 594.9 1101.0 711.4" fill="none" stroke="#2a82ff" stroke-width="1.250"/>
<rect x="617.300" y="374.300" width="6.300" height="6.300" fill="#0f7bff"/><rect x="954.700" y="374.300" width="6.300" height="6.300" fill="#0f7bff"/>
<!-- center dashed -->
<path d="M788.500 829V1030" stroke="#f0597c" stroke-width="1.300"/>
<path d="M788.500 688V1030" stroke="#1a7aff" stroke-width="2" stroke-dasharray="7 3.900"/>
<!-- pink -->
<path d="M562.8 505.6L475.8 711.2Q483.5 731.5 495.0 748.8Q521.0 769.6 556.2 786.5C620.0 810.0 710.0 824.1 788.8 824.1" fill="none" stroke="#dc74a0" stroke-width="1.350" stroke-linejoin="round"/>
<rect x="559.600" y="502.400" width="6.400" height="6.400" fill="#d2669a"/>
<g fill="#cf6496"><circle cx="475.800" cy="711.200" r="2.300"/><circle cx="495" cy="748.800" r="2.300"/><circle cx="556.200" cy="786.500" r="2.300"/></g>
<!-- cyan -->
<path d="M1014.8 505.0L1101.0 711.4Q1094.1 731.5 1081.8 749.0Q1056.6 769.6 1020.7 786.6C957.6 810.0 867.6 824.1 788.8 824.1" fill="none" stroke="#08e6d2" stroke-width="2.600" stroke-linejoin="round"/>
<circle cx="1014.900" cy="504.800" r="4.200" fill="#fff" stroke="#08e6d2" stroke-width="1.400"/>
<g fill="#fff" stroke="#c3628f" stroke-width="1.200"><circle cx="1101.0" cy="711.400" r="3.400"/><circle cx="1081.8" cy="749" r="3.400"/><circle cx="1020.7" cy="786.600" r="3.400"/></g>
<rect x="785.100" y="820.600" width="7.800" height="7.800" fill="#fff" stroke="#c3628f" stroke-width="1.200"/><circle cx="789" cy="824.400" r="2" fill="#c3628f"/>
<!-- label -->
<rect x="1041.200" y="531" width="47.700" height="20.900" rx="4" fill="#3a444c" opacity="0.86"/>
<text x="1065" y="547.200" font-size="15" fill="#74f074" text-anchor="middle" font-family="Liberation Sans, sans-serif">2.585</text>
<!-- widget -->
<rect x="1276.900" y="420.700" width="54.600" height="54.600" fill="none" stroke="#f08aa0" stroke-width="1.100"/>
<rect x="1282.600" y="426.400" width="43.200" height="43.200" fill="none" stroke="#f0627e" stroke-width="1.100"/>
<circle cx="1304.200" cy="448" r="21.400" fill="#2f2d30"/>
<circle cx="1304.200" cy="448" r="4.800" fill="#f7e81a"/>
<g fill="#fbe3ea"><circle cx="1304.200" cy="432.800" r="3.900"/><circle cx="1304.200" cy="463.200" r="3.900"/><circle cx="1289" cy="449.400" r="3.900"/><circle cx="1319.400" cy="449" r="3.900"/></g>
<!-- cloud icon -->
<path d="M385.500 244.500C383.500 242.500 385 239 388 239C387.500 235.500 391.500 233 394 235.500C396.500 233 400.500 235 400 239C403.500 239 404 243 401.500 245C399 246.500 396.500 246 396.500 246L395 248L393.500 246C390 246.500 387 246 385.500 244.500Z" fill="#fff" stroke="#8a8a8a" stroke-width="0.900"/>
<path d="M387.500 241.500C388.500 244.500 392 244.500 393.500 242M397 242C398.500 244.500 400.500 243 400.500 241" fill="none" stroke="#8a8a8a" stroke-width="0.800"/>
<!-- rulers -->
<path d="M451.6 218.6V224.5M538.2 218.6V224.5M624.8 218.6V224.5M711.5 218.6V224.5M798.1 218.6V224.5M884.7 218.6V224.5M971.3 218.6V224.5M1057.9 218.6V224.5M1144.6 218.6V224.5M1231.2 218.6V224.5M1317.8 218.6V224.5M1404.4 218.6V224.5M1491.0 218.6V224.5M1577.7 218.6V224.5M371.6 287.4H376.5M371.6 374.0H376.5M371.6 460.6H376.5M371.6 547.3H376.5M371.6 633.9H376.5M371.6 720.5H376.5M371.6 807.1H376.5M371.6 893.7H376.5M371.6 980.4H376.5" stroke="#a8a8a8" stroke-width="1" fill="none"/>
<rect x="356" y="224" width="1248" height="1" fill="#b9b9b9"/><rect x="376" y="224" width="1" height="806" fill="#b9b9b9"/>
<rect x="356" y="204" width="1" height="826" fill="#c4c4c4"/>
<rect x="1603" y="204" width="1" height="826" fill="#ababab"/><rect x="1604" y="204" width="1" height="826" fill="#c9c9c9"/>
<g font-size="12.500" fill="#999" text-anchor="middle" font-family="Liberation Sans, sans-serif"><text x="625" y="217.800">-60</text><text x="1058" y="217.800">-55</text><text x="1491" y="217.800">-50</text>
<text transform="translate(368.700 287.400) rotate(-90)">0</text><text transform="translate(368.700 720.500) rotate(-90)">5</text></g>
</svg>
</div>
<div id="rightpanel" class="a">
<div class="t" style="left:156px;top:19.500px;font-size:15.500px;font-weight:bold;color:#606060;transform:translateX(-50%) scaleX(.985)">Name: Point 143</div>
<svg class="a" style="left:20px;top:46px" width="280" height="22" viewBox="1625 250 280 22"><g fill="#acacac">
<rect x="1633.700" y="255" width="1" height="12.600"/><rect x="1636.500" y="257.700" width="6.200" height="2.400"/><rect x="1636.500" y="262.400" width="9.600" height="2.600"/>
<rect x="1667" y="255" width="1" height="12.600"/><rect x="1663" y="257.700" width="8.600" height="2.400"/><rect x="1661.800" y="262.400" width="11.200" height="2.600"/>
<rect x="1699.100" y="255" width="1" height="12.600"/><rect x="1690.400" y="257.700" width="7" height="2.400"/><rect x="1687.500" y="262.400" width="9.900" height="2.600"/>
<rect x="1742" y="255" width="12.200" height="1"/><rect x="1744" y="257.600" width="2.600" height="9.700"/><rect x="1749.200" y="257.600" width="2.400" height="5.800"/>
<rect x="1768.700" y="259.800" width="13.700" height="1"/><rect x="1771.100" y="255" width="2.600" height="11"/><rect x="1776.300" y="256.700" width="2.400" height="8"/>
<rect x="1796.700" y="266.400" width="12.500" height="1"/><rect x="1799.100" y="255" width="2.600" height="10"/><rect x="1804.300" y="259" width="2.400" height="6"/>
<rect x="1851.300" y="254" width="1" height="14.600"/><rect x="1857.600" y="254" width="1" height="14.600"/><rect x="1850.200" y="258.600" width="3.200" height="6" rx="1"/><rect x="1856.500" y="257.400" width="3.200" height="8.200" rx="1"/>
<rect x="1875.300" y="257.600" width="15.400" height="1"/><rect x="1875.300" y="263.500" width="15.400" height="1"/><rect x="1880" y="256.500" width="6.500" height="3.200" rx="1"/><rect x="1878.500" y="262.300" width="9.500" height="3.400" rx="1"/>
</g></svg>
<div class="a" style="left:0;top:83.500px;width:312px;height:31px;background:#fff;border-bottom:1px solid #cfcfcf"></div>
<svg class="a" style="left:16px;top:92px" width="14" height="10" viewBox="0 0 14 10"><polygon points="1.400,1.400 12.400,1.400 6.900,8.400" fill="#555"/></svg>
<div class="t" style="left:37px;top:90.500px;font-size:15.500px;font-weight:bold;color:#333;transform:scaleX(.965);transform-origin:0 0">Point Properties</div>
<div class="t" style="left:24.500px;top:136.500px;font-size:15px;color:#1a1a1a">Allowance Corner:</div>
<div class="a" style="left:242px;top:130px;width:57.500px;height:25.500px;border:1px solid #c9c9c9;border-radius:4px;background:#f3f3f3"></div>
<div class="t" style="left:256px;top:139px;font-size:12px;color:#aaa;letter-spacing:.5px">...</div>
<svg class="a" style="left:283px;top:132px" width="14" height="22" viewBox="0 0 14 22"><path d="M2.400 8.200L7 3.800L11.600 8.200M2.400 13.600L7 18L11.600 13.600" stroke="#666" stroke-width="1.400" fill="none"/></svg>
<div class="a" style="left:24.500px;top:185px;width:17.500px;height:17.500px;border:1px solid #b8b8b8;border-radius:2.500px;background:#f0f0f0"></div>
<div class="t" style="left:50px;top:185.500px;font-size:15px;color:#a9a9a9">Corner Point</div>
</div>
<div id="bottomstrip" class="a"><div class="a" style="left:619px;top:0;width:61px;height:2px;background:#5a606b"></div></div>
</div>
</body>
</html>
